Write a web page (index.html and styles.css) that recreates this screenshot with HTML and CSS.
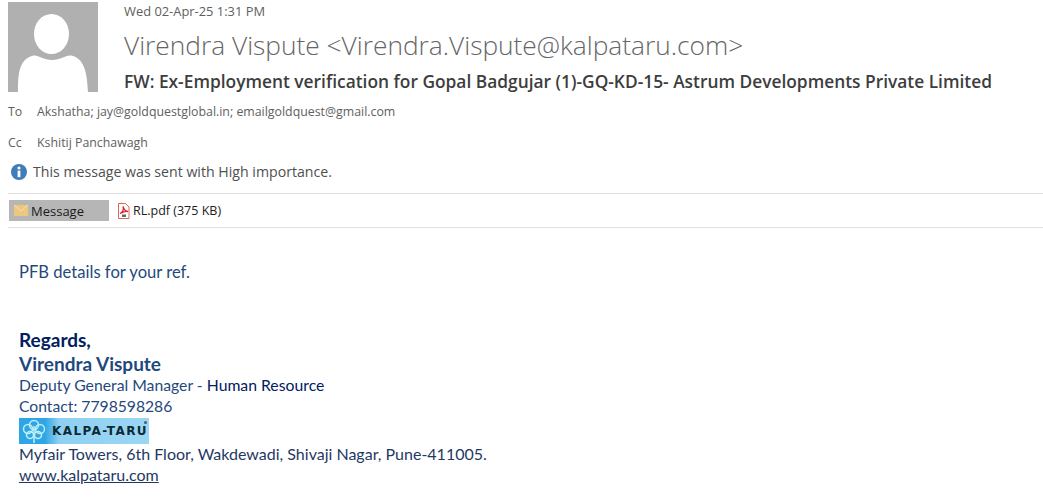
FILE: index.html
```html
<!DOCTYPE html>
<html lang="en">
<head>
    <meta charset="UTF-8">
    <meta name="viewport" content="width=device-width, initial-scale=1.0">
    <title>FW: Ex-Employment verification</title>
    <link rel="stylesheet" href="styles.css">
</head>
<body>
    <div class="header">
        <svg class="avatar" width="90" height="90" viewBox="0 0 90 90">
            <rect width="90" height="90" fill="#b0b0b0"/>
            <ellipse cx="43.500" cy="32" rx="17.500" ry="20" fill="#fff"/>
            <path d="M10 90 C10 72 11 58 24 54 C30 52 34 58 44 58 C54 58 58 52 65 54 C77 58 79 72 80 90 Z" fill="#fff"/>
        </svg>
        <div class="header-text">
            <div class="sent">Wed 02-Apr-25 1:31 PM</div>
            <div class="sender">Virendra Vispute &lt;Virendra.Vispute@kalpataru.com&gt;</div>
            <div class="subject">FW: Ex-Employment verification for Gopal Badgujar (1)-GQ-KD-15- Astrum Developments Private Limited</div>
        </div>
    </div>

    <div class="recipient recipient-to">
        <span class="recipient-label">To</span>
        <span class="recipient-names">Akshatha; jay@goldquestglobal.in; emailgoldquest@gmail.com</span>
    </div>
    <div class="recipient recipient-cc">
        <span class="recipient-label">Cc</span>
        <span class="recipient-names">Kshitij Panchawagh</span>
    </div>

    <div class="notice">
        <svg width="16" height="16" viewBox="0 0 16 16">
            <circle cx="8" cy="8" r="8" fill="#3f7cb8"/>
            <circle cx="8" cy="4" r="1.600" fill="#fff"/>
            <rect x="6.600" y="6.600" width="2.800" height="6.600" fill="#fff"/>
        </svg>
        <span>This message was sent with High importance.</span>
    </div>

    <div class="attachments">
        <div class="tab">
            <svg width="14" height="11" viewBox="0 0 14 11">
                <rect width="14" height="11" fill="#eec77e"/>
                <path d="M0 0 L7 6 L14 0" fill="none" stroke="#f7e0ae" stroke-width="1"/>
            </svg>
            <span>Message</span>
        </div>
        <div class="file">
            <svg width="13" height="16" viewBox="0 0 13 16">
                <path d="M1.500 .5 H8.500 L12 4 V15.500 H1.500 Z" fill="#fff" stroke="#e2625c"/>
                <path d="M3 10.500 C6 9.500 7 6 6 3.500 C7 6.500 8 8.500 11 8.500 C9 8 6 9 3 10.500 Z" fill="none" stroke="#d8202a" stroke-width="1.300"/>
                <rect x="5" y="11.500" width="4" height="2.500" fill="#666"/>
            </svg>
            <span>RL.pdf (375 KB)</span>
        </div>
    </div>

    <div class="message">
        <p class="intro">PFB details for your ref.</p>
        <div class="regards">Regards,</div>
        <div class="sig-name">Virendra Vispute</div>
        <div class="sig-line sig-title">Deputy General Manager - <span class="sig-dark">Human Resource</span></div>
        <div class="sig-line sig-contact">Contact: 7798598286</div>
        <div class="logo">
            <svg width="30" height="26" viewBox="0 0 30 26">
                <g fill="none" stroke="#bfeef5" stroke-width="1.500">
                    <circle cx="15" cy="7" r="4.500"/>
                    <circle cx="9" cy="11" r="4.500"/>
                    <circle cx="21" cy="11" r="4.500"/>
                    <circle cx="11" cy="17" r="3.500"/>
                    <circle cx="19" cy="17" r="3.500"/>
                    <path d="M15 8 V25"/>
                </g>
            </svg>
            <span class="logo-text">KALPA-TARU</span>
            <span class="logo-mark"></span>
        </div>
        <div class="sig-line address">Myfair Towers, 6th Floor, Wakdewadi, Shivaji Nagar, Pune-411005.</div>
        <a class="sig-line site" href="#">www.kalpataru.com</a>
    </div>
</body>
</html>
```

FILE: styles.css
```css
body {
    margin: 0;
    height: 498px;
    overflow: hidden;
    background: #fff;
    font-family: "Open Sans", "Noto Sans", sans-serif;
}

.header {
    display: flex;
    padding: 2px 0 0 8px;
}

.avatar {
    flex: none;
}

.header-text {
    margin-left: 26px;
    white-space: nowrap;
}

.sent {
    font-size: 12.9px;
    line-height: 18px;
    margin-top: 0;
    color: #606060;
}

.sender {
    font-size: 26.3px;
    line-height: 36px;
    margin-top: 7px;
    color: #666;
    font-weight: 300;
}

.subject {
    font-size: 17.35px;
    line-height: 24px;
    margin-top: 6px;
    font-weight: 600;
    color: #3d3d3d;
}

.recipient {
    display: flex;
    padding-left: 8px;
    font-size: 12.35px;
    line-height: 16px;
    color: #606060;
    white-space: nowrap;
}

.recipient-to {
    margin-top: 11px;
}

.recipient-cc {
    margin-top: 15px;
}

.recipient-label {
    width: 29px;
}

.notice {
    display: flex;
    align-items: center;
    gap: 6px;
    margin: 12px 0 0 11px;
    font-size: 14.15px;
    line-height: 18px;
    color: #505050;
}

.attachments {
    display: flex;
    align-items: center;
    height: 33px;
    margin: 12px 0 0 8px;
    border-top: 1px solid #e1e1e1;
    border-bottom: 1px solid #e1e1e1;
}

.tab {
    display: flex;
    align-items: center;
    gap: 3px;
    width: 100px;
    height: 21px;
    margin-left: 1px;
    padding-left: 5px;
    box-sizing: border-box;
    background: #b6b6b6;
    font-size: 13px;
    color: #1a1a1a;
}

.file {
    display: flex;
    align-items: center;
    gap: 3px;
    margin-left: 8px;
    font-size: 12.5px;
    color: #222;
}

.message {
    padding: 34px 0 0 19px;
    font-family: Lato, "Open Sans", sans-serif;
    font-size: 16px;
    line-height: 21px;
    color: #1f3864;
}

.intro {
    margin: 0 0 45px;
    font-size: 16.6px;
    color: #1f497d;
}

.regards {
    font-size: 19px;
    line-height: 24px;
    font-weight: 700;
    color: #002060;
}

.sig-name {
    font-size: 19px;
    line-height: 24px;
    margin-bottom: -2px;
    font-weight: 700;
    color: #1f497d;
}

.sig-line {
    display: block;
}

.sig-title {
    font-size: 15.75px;
    color: #1f497d;
}

.sig-contact {
    font-size: 15.7px;
    margin-top: 1px;
    color: #1f497d;
}

.sig-dark {
    color: #002060;
}

.logo {
    display: flex;
    align-items: center;
    position: relative;
    width: 130px;
    height: 26px;
    margin: 1px 0 -1px;
    background: linear-gradient(90deg, #2ea6e6 0, #2ea6e6 26px, #8fd0f2 40px, #9bd6f4 100%);
}

.logo-text {
    margin-left: 3px;
    font-family: "DejaVu Sans", sans-serif;
    font-size: 12px;
    font-weight: 700;
    color: #0c2a34;
    letter-spacing: 1.400px;
    white-space: nowrap;
}

.logo-mark {
    position: absolute;
    right: 2px;
    top: 3px;
    width: 3px;
    height: 3px;
    border-radius: 50%;
    background: #40606e;
}

.address {
    color: #1f3864;
}

.site {
    color: #1f3864;
    text-decoration: underline;
}
```
